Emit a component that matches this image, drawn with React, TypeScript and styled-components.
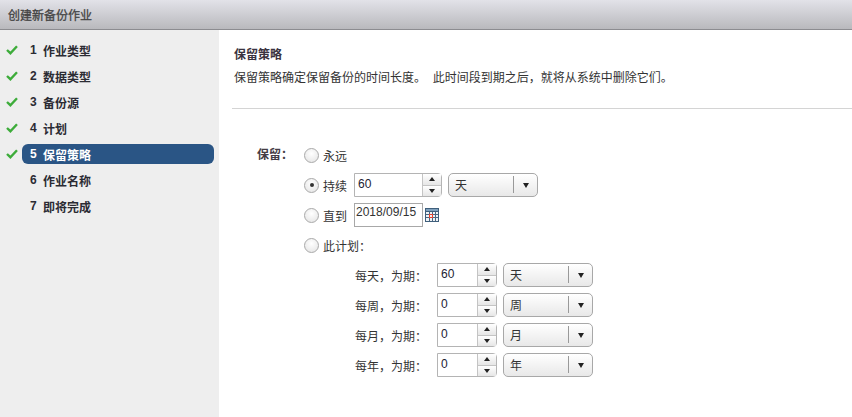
import React from "react";
import styled, { createGlobalStyle } from "styled-components";

const Global = createGlobalStyle`
  html, body { margin: 0; padding: 0; background: #fff; }
  body { font-family: "Liberation Sans", "Noto Sans CJK SC", sans-serif; font-size: 12px; color: #333; }
  #root { width: 852px; height: 417px; overflow: hidden; }
`;

const Page = styled.div`
  width: 852px; height: 417px; display: flex; flex-direction: column;
`;
const Header = styled.header`
  height: 29px; flex: none; box-sizing: content-box; border-bottom: 1px solid #8c8c90;
  background: linear-gradient(#e2e2e8, #b9b9bd);
  display: flex; align-items: center; padding-left: 8px;
  font-size: 12px; color: #444; font-weight: 400; -webkit-text-stroke: 0.3px #444;
`;
const Body = styled.div`
  flex: 1; display: flex; min-height: 0;
`;
const Sidebar = styled.nav`
  width: 219px; flex: none; background: #eeeeee; padding-top: 7px; box-sizing: border-box;
  display: flex; flex-direction: column;
`;
const Step = styled.div`
  height: 26px; display: flex; align-items: center;
`;
const CheckSlot = styled.span`
  width: 22px; flex: none; display: flex; justify-content: flex-start; padding-left: 6px; box-sizing: border-box;
`;
const Pill = styled.div<{ $active?: boolean }>`
  flex: none; width: 192px; height: 20px; display: flex; align-items: center; padding-left: 8px; box-sizing: border-box;
  border-radius: 6px; font-weight: 700; font-size: 12px;
  background: ${p => (p.$active ? "#2a5585" : "transparent")};
  color: ${p => (p.$active ? "#fff" : "#2b2b33")};
`;
const Num = styled.span`
  width: 13px; flex: none; font-size: 12px;
`;
const Main = styled.main`
  flex: 1; display: flex; flex-direction: column; min-width: 0;
`;
const Intro = styled.div`
  height: 79px; flex: none; box-sizing: border-box; padding: 17px 0 0 2px; margin-left: 13px;
  border-bottom: 1px solid #d4d4d4;
`;
const Title = styled.div`
  font-weight: 700; font-size: 12px; line-height: 17px; color: #3a3340;
`;
const Desc = styled.div`
  font-size: 12px; line-height: 17px; margin-top: 6px; color: #333; white-space: nowrap;
`;
const Form = styled.div`
  display: flex; padding: 31px 0 0 38px;
`;
const FormLabel = styled.div`
  width: 47px; flex: none; font-weight: 700; color: #443c44; line-height: 30px;
`;
const Rows = styled.div`
  display: flex; flex-direction: column;
`;
const Row = styled.div<{ $low?: boolean }>`
  height: 30px; box-sizing: border-box; display: flex; align-items: center;
  padding-top: ${p => (p.$low ? 1 : 0)}px;
`;
const RadioDot = styled.span<{ $on?: boolean }>`
  width: 13px; height: 13px; flex: none; border: 1px solid #a9a9a9; border-radius: 50%; margin-right: 4px;
  background: radial-gradient(circle at 50% 35%, #fff, #e2e2e2);
  display: flex; align-items: center; justify-content: center;
  &::after { content: ""; width: 4px; height: 4px; border-radius: 50%; background: ${p => (p.$on ? "#333" : "transparent")}; }
`;
const RadioText = styled.span`
  width: 31px; flex: none; color: #333; white-space: nowrap;
`;
const Spinner = styled.div<{ $w: number }>`
  width: ${p => p.$w}px; height: 24px; flex: none; box-sizing: border-box; display: flex;
  border: 1px solid #b4b4b4; background: #fff; border-radius: 0 4px 4px 0;
`;
const SpinValue = styled.span`
  flex: 1; padding-left: 3px; line-height: 21px; color: #223; font-size: 12px;
`;
const SpinButtons = styled.div`
  width: 18px; flex: none; display: flex; flex-direction: column; border-left: 1px solid #c4c4c4;
`;
const SpinButton = styled.div<{ $down?: boolean }>`
  flex: 1; display: flex; align-items: center; justify-content: center;
  background: linear-gradient(#ffffff, #e6e6e6);
  ${p => (p.$down ? "border-top: 1px solid #c4c4c4;" : "")}
  &::after {
    content: ""; width: 0; height: 0; border-left: 3.5px solid transparent; border-right: 3.5px solid transparent;
    ${p => (p.$down ? "border-top: 4px solid #222;" : "border-bottom: 4px solid #222;")}
  }
`;
const Select = styled.div`
  width: 90px; height: 24px; flex: none; box-sizing: border-box; margin-left: 6px; display: flex;
  border: 1px solid #a8a8a8; border-radius: 5px; background: linear-gradient(#ffffff, #e8e8e8);
`;
const SelectValue = styled.span`
  flex: 1; padding-left: 6px; line-height: 24px; color: #333; position: relative;
  &::after { content: ""; position: absolute; right: 0; top: 2px; height: 17px; border-right: 1px solid #999; }
`;
const SelectArrow = styled.span`
  width: 23px; flex: none; display: flex; align-items: center; justify-content: center;
  &::after { content: ""; width: 0; height: 0; border-left: 3.5px solid transparent; border-right: 3.5px solid transparent; border-top: 5px solid #222; }
`;
const DateInput = styled.div`
  width: 69px; height: 24px; flex: none; box-sizing: border-box; border: 1px solid #a8a8a8; padding-left: 1px;
  line-height: 17px; color: #333; font-size: 12px; background: #fff; white-space: nowrap;
`;
const CalIcon = styled.svg`
  margin-left: 2px; flex: none;
`;
const SubRow = styled.div`
  height: 30px; display: flex; align-items: center; padding-left: 51px;
`;
const SubLabel = styled.span`
  width: 82px; flex: none; color: #333; white-space: nowrap;
`;

const Check = () => (
  <svg width="12" height="10" viewBox="0 0 12 10">
    <path d="M1 5 L4.4 8.2 L11 1.2" fill="none" stroke="#3dac3a" strokeWidth="2.4" />
  </svg>
);

const Calendar = () => (
  <CalIcon width="14" height="14" viewBox="0 0 14 14">
    <rect x="0" y="0" width="14" height="14" fill="#3f5f7c" />
    <rect x="1" y="1" width="12" height="2" fill="#7fa0bd" />
    <rect x="1" y="4" width="12" height="9" fill="#eef2f6" />
    <path d="M4.5 4v9M7.5 4v9M10.5 4v9M1 6.5h12M1 9.5h12" stroke="#4a6680" strokeWidth="1" />
    <rect x="4.5" y="6.5" width="3" height="3" fill="none" stroke="#e8432e" />
  </CalIcon>
);

const Spin = ({ value, w }: { value: string; w: number }) => (
  <Spinner $w={w}>
    <SpinValue>{value}</SpinValue>
    <SpinButtons>
      <SpinButton />
      <SpinButton $down />
    </SpinButtons>
  </Spinner>
);

const Sel = ({ value }: { value: string }) => (
  <Select>
    <SelectValue>{value}</SelectValue>
    <SelectArrow />
  </Select>
);

const steps = ["作业类型", "数据类型", "备份源", "计划", "保留策略", "作业名称", "即将完成"];
const subs = [
  ["每天\uFF0C为期\uFF1A", "60", "天"],
  ["每周\uFF0C为期\uFF1A", "0", "周"],
  ["每月\uFF0C为期\uFF1A", "0", "月"],
  ["每年\uFF0C为期\uFF1A", "0", "年"],
];

export default function App() {
  return (
    <Page>
      <Global />
      <Header>创建新备份作业</Header>
      <Body>
        <Sidebar>
          {steps.map((s, i) => (
            <Step key={s}>
              <CheckSlot>{i < 5 && <Check />}</CheckSlot>
              <Pill $active={i === 4}>
                <Num>{i + 1}</Num>
                {s}
              </Pill>
            </Step>
          ))}
        </Sidebar>
        <Main>
          <Intro>
            <Title>保留策略</Title>
            <Desc>{"保留策略确定保留备份的时间长度。\u00a0\u00a0此时间段到期之后\uFF0C就将从系统中删除它们。"}</Desc>
          </Intro>
          <Form>
            <FormLabel>{"保留\uFF1A"}</FormLabel>
            <Rows>
              <Row>
                <RadioDot />
                <RadioText>永远</RadioText>
              </Row>
              <Row>
                <RadioDot $on />
                <RadioText>持续</RadioText>
                <Spin value="60" w={88} />
                <Sel value="天" />
              </Row>
              <Row>
                <RadioDot />
                <RadioText>直到</RadioText>
                <DateInput>2018/09/15</DateInput>
                <Calendar />
              </Row>
              <Row $low>
                <RadioDot />
                <RadioText>{"此计划\uFF1A"}</RadioText>
              </Row>
              {subs.map(([l, v, u]) => (
                <SubRow key={l}>
                  <SubLabel>{l}</SubLabel>
                  <Spin value={v} w={60} />
                  <Sel value={u} />
                </SubRow>
              ))}
            </Rows>
          </Form>
        </Main>
      </Body>
    </Page>
  );
}
